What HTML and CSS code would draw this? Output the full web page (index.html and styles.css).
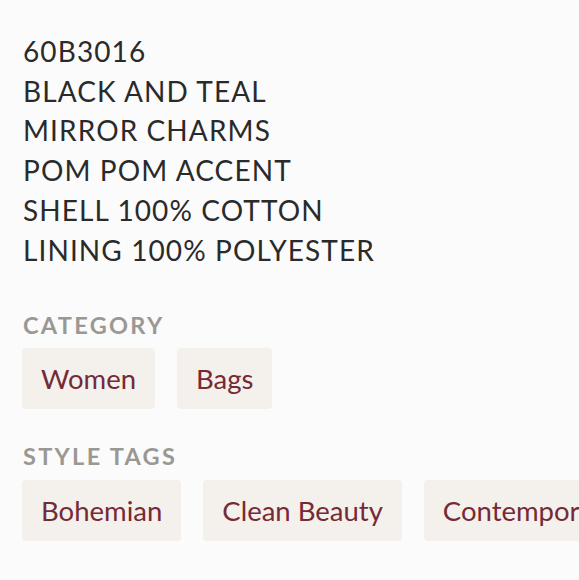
FILE: index.html
```html
<!DOCTYPE html>
<html>
<head>
<meta charset="utf-8">
<link rel="stylesheet" href="styles.css">
</head>
<body>
<div class="page">
  <div class="desc">
    <div>60B3016</div>
    <div>BLACK AND TEAL</div>
    <div>MIRROR CHARMS</div>
    <div>POM POM ACCENT</div>
    <div>SHELL 100% COTTON</div>
    <div>LINING 100% POLYESTER</div>
  </div>
  <div class="section cat">
    <div class="label">CATEGORY</div>
    <div class="chips">
      <span class="chip">Women</span>
      <span class="chip">Bags</span>
    </div>
  </div>
  <div class="section tags">
    <div class="label">STYLE TAGS</div>
    <div class="chips">
      <span class="chip">Bohemian</span>
      <span class="chip">Clean Beauty</span>
      <span class="chip">Contemporary</span>
    </div>
  </div>
</div>
</body>
</html>
```
FILE: styles.css
```css
html, body {
  margin: 0;
  padding: 0;
  background: #fbfbfb;
  overflow: hidden;
}
.page {
  padding: 32px 0 0 23px;
  font-family: Lato, "Noto Sans", sans-serif;
  width: 579px;
  box-sizing: border-box;
  overflow: hidden;
}
.desc {
  font-size: 28px;
  line-height: 39.7px;
  letter-spacing: 1.1px;
  color: #2a2a2a;
}
.section {
  display: flex;
  flex-direction: column;
}
.cat { margin-top: 42px; }
.tags { margin-top: 34px; }
.label {
  font-size: 23.5px;
  font-weight: 700;
  letter-spacing: 2.3px;
  color: #9a9893;
  line-height: 26px;
}
.chips {
  display: flex;
  gap: 22px;
  margin-top: 10px;
  margin-left: -1px;
  white-space: nowrap;
}
.tags .chips {
  margin-top: 11px;
}
.chip {
  flex: none;
  background: #f4f0ec;
  border-radius: 4px;
  height: 61px;
  padding: 0 19px;
  display: flex;
  align-items: center;
  font-size: 27.5px;
  color: #752a36;
}
```
